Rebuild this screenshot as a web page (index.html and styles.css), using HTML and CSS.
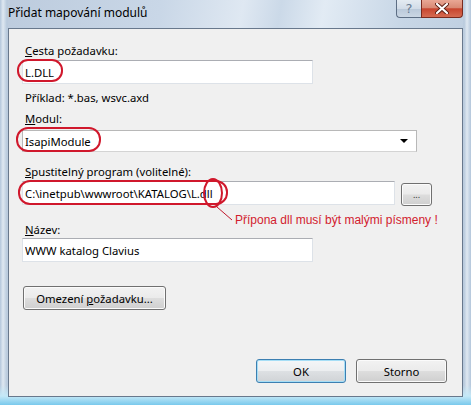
FILE: index.html
```html
<!DOCTYPE html>
<html lang="cs">
  <head>
    <meta charset="UTF-8" />
    <title>Přidat mapování modulů</title>
    <link rel="stylesheet" href="styles.css">
  </head>
  <body>
    <div class="window">
      <!-- Title bar -->
      <div class="titlebar">
        <span class="title">Přidat mapování modulů</span>
        <div class="caption-buttons">
          <span class="cap-btn help">?</span>
          <span class="cap-btn close">
            <svg width="14" height="11" viewBox="0 0 14 11">
              <path d="M2 1 L12 10 M12 1 L2 10" stroke="#5a1e14" stroke-width="4" stroke-linecap="round" />
              <path d="M2 1 L12 10 M12 1 L2 10" stroke="#ffffff" stroke-width="2.2" stroke-linecap="round" />
            </svg>
          </span>
        </div>
      </div>

      <!-- Client area -->
      <div class="client">
        <p class="label"><u>C</u>esta požadavku:</p>
        <input class="textbox short" type="text" value="L.DLL" />
        <p class="label hint">Příklad: *.bas, wsvc.axd</p>

        <p class="label label-module"><u>M</u>odul:</p>
        <div class="combo">
          <span>IsapiModule</span>
          <span class="combo-arrow"></span>
        </div>

        <p class="label label-exe"><u>S</u>pustitelný program (volitelné):</p>
        <div class="exe-row">
          <input class="textbox long" type="text" value="C:\inetpub\wwwroot\KATALOG\L.dll" />
          <button class="btn browse">...</button>
        </div>

        <p class="label label-name"><u>N</u>ázev:</p>
        <input class="textbox short name" type="text" value="WWW katalog Clavius" />

        <button class="btn restrict">Omezení <u>p</u>ožadavku...</button>

        <div class="footer">
          <button class="btn default">OK</button>
          <button class="btn">Storno</button>
        </div>
      </div>

      <!-- Red annotation marks drawn over the dialog -->
      <svg class="marks" width="471" height="405" viewBox="0 0 471 405">
        <g fill="none" stroke="#d0182c" stroke-width="2">
          <rect x="18" y="60" width="44" height="21" rx="10" />
          <rect x="17" y="128" width="83" height="23" rx="11" />
          <rect x="19" y="181" width="208" height="23" rx="11" />
          <ellipse cx="213" cy="193" rx="9" ry="14" />
        </g>
        <line x1="217" y1="207" x2="232" y2="220" stroke="#c0182c" stroke-width="1" />
      </svg>
      <span class="note">Přípona dll musí být malými písmeny !</span>
    </div>
  </body>
</html>
```

FILE: styles.css
```css
* {
  margin: 0;
  padding: 0;
  box-sizing: border-box;
}
body {
  margin: 0;
  width: 471px;
  height: 405px;
  overflow: hidden;
  font-family: "Noto Sans", sans-serif;
  font-size: 11.3px;
  color: #000;
}

/* Window frame (Aero glass) */
.window {
  position: relative;
  width: 471px;
  height: 405px;
  padding: 0 8px 8px 8px;
  display: flex;
  flex-direction: column;
  background:
    linear-gradient(to bottom, transparent 385px, #c4e8f7 396px, #79c9ec 405px),
    linear-gradient(to right, #b3c6db 0px, #dfe8f1 3px, #b7c9dc 7px, transparent 8px, transparent 463px, #b7c9dc 464px, #dfe8f1 467px, #b3c6db 471px),
    linear-gradient(100deg, #bccbdd 0%, #c9d7e7 30%, #dfe8f2 45%, #cbd9e8 52%, #e2ebf4 60%, #c7d6e6 75%, #b8c9dc 100%);
}

.titlebar {
  height: 28px;
  display: flex;
  align-items: flex-start;
  justify-content: space-between;
}
.title {
  margin-top: 5px;
  font-size: 12px;
  line-height: 16px;
}
.caption-buttons {
  display: flex;
}
.cap-btn {
  height: 18px;
  display: flex;
  align-items: center;
  justify-content: center;
  border: 1px solid #5d6e84;
  border-top: none;
}
.help {
  width: 25px;
  border-radius: 0 0 0 4px;
  border-right: none;
  background: linear-gradient(#e4ebf2 0%, #d2dce8 50%, #b9c8d9 51%, #cbd7e4 100%);
  color: #6a7c92;
  font-family: "DejaVu Sans", sans-serif;
  font-size: 13px;
}
.close {
  width: 42px;
  border-radius: 0 0 4px 0;
  border-color: #7a2a1e;
  background: linear-gradient(#e9a795 0%, #d98a75 45%, #c8452e 52%, #d56b52 100%);
}

/* Client area */
.client {
  flex: 1;
  display: flex;
  flex-direction: column;
  align-items: flex-start;
  background-color: #f0f0f0;
  border: 1px solid #68788c;
  padding: 14px 15px 0 13px;
}

.label {
  margin-left: 3px;
  line-height: 15px;
  white-space: nowrap;
}
.hint {
  margin-top: 6px;
}
.label-module {
  margin-top: 6px;
}
.label-exe {
  margin-top: 12px;
}
.label-name {
  margin-top: 16px;
}

.textbox {
  height: 24px;
  margin-top: 2px;
  padding: 0 2px;
  font-family: inherit;
  font-size: inherit;
  color: #000;
  background-color: #fff;
  border: 1px solid #dde2e8;
  border-top-color: #abadb3;
  outline: none;
}
.short {
  width: 291px;
}
.long {
  width: 373px;
  margin-top: 0;
}
.name {
  margin-top: 1px;
}

.combo {
  width: 395px;
  height: 22px;
  margin-top: 4px;
  padding: 0 8px 0 2px;
  display: flex;
  align-items: center;
  justify-content: space-between;
  background-color: #fff;
  border: 1px solid #b8b8b8;
  border-bottom-color: #d4d4d4;
}
.combo-arrow {
  width: 0;
  height: 0;
  border-left: 4px solid transparent;
  border-right: 4px solid transparent;
  border-top: 4px solid #000;
}

.exe-row {
  margin-top: 2px;
  display: flex;
  gap: 6px;
}

/* Vista push buttons */
.btn {
  height: 24px;
  font-family: inherit;
  font-size: inherit;
  color: #000;
  border: 1px solid #707070;
  border-radius: 3px;
  background: linear-gradient(#f2f2f2 0%, #ebebeb 48%, #dddddd 52%, #cfcfcf 100%);
  box-shadow: inset 0 0 0 1px #fbfbfb;
}
.browse {
  width: 31px;
  height: 23px;
  margin-top: 2px;
  font-size: 9px;
  color: #333;
}
.restrict {
  width: 143px;
  margin-top: 24px;
  margin-left: 1px;
}
.footer {
  align-self: flex-end;
  margin-top: 49px;
  display: flex;
  gap: 10px;
}
.footer .btn {
  width: 91px;
}
.btn.default {
  width: 90px;
  border-color: #3c7fb1;
  box-shadow: inset 0 0 0 1px #a6def6;
  background: linear-gradient(#f4f6f8 0%, #eceef0 48%, #dde0e3 52%, #d0d3d6 100%);
}

/* Annotations */
.marks {
  position: absolute;
  top: 0;
  left: 0;
  pointer-events: none;
}
.note {
  position: absolute;
  top: 212px;
  left: 235px;
  font-family: "Liberation Sans", sans-serif;
  font-size: 12px;
  line-height: 16px;
  color: #d2202e;
  white-space: nowrap;
}
```
